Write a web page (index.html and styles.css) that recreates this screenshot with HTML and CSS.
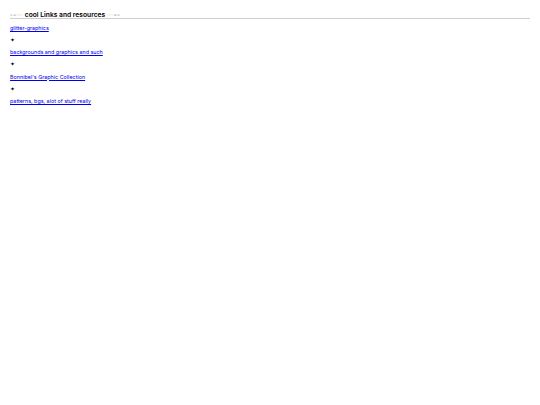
FILE: index.html
```html
<!DOCTYPE html>
<html>
<head>
<meta charset="utf-8">
<link rel="stylesheet" href="styles.css">
</head>
<body>
<div class="box">
  <h2 class="title"><span class="deco">⊶┈┈</span><span class="tt">cool Links and resources</span><span class="deco">┈┈⊷</span></h2>
  <div class="list">
    <a class="lnk" href="#">glitter-graphics</a>
    <div class="star">✦</div>
    <a class="lnk" href="#">backgrounds and graphics and such</a>
    <div class="star">✦</div>
    <a class="lnk" href="#">Bonnibel's Graphic Collection</a>
    <div class="star">✦</div>
    <a class="lnk" href="#">patterns, bgs, alot of stuff really</a>
  </div>
</div>
</body>
</html>
```
FILE: styles.css
```css
html, body { margin: 0; padding: 0; background: #fff; }
body { font-family: Inter, "Liberation Sans", Arial, sans-serif; padding: 10px; }
.box { display: flex; flex-direction: column; }
.title {
  margin: 0;
  font-size: 6.7px;
  line-height: 6px;
  padding-top: 2px;
  padding-bottom: 0;
  border-bottom: 1px solid #cfcfcf;
  display: flex;
  align-items: center;
  gap: 2px;
  font-weight: 600;
  color: #000;
}
.deco { color: #c0c0c0; font-weight: normal; font-size: 5.5px; letter-spacing: -0.4px; }
.list { display: flex; flex-direction: column; padding-top: 6px; }
.lnk, .star { height: 12.15px; line-height: 7px; font-size: 5.4px; display: block; }
.lnk { color: #0000ee; text-decoration: underline; text-decoration-thickness: 0.5px; text-underline-offset: 1px; }
.star { color: #000; font-size: 5.5px; }
```
